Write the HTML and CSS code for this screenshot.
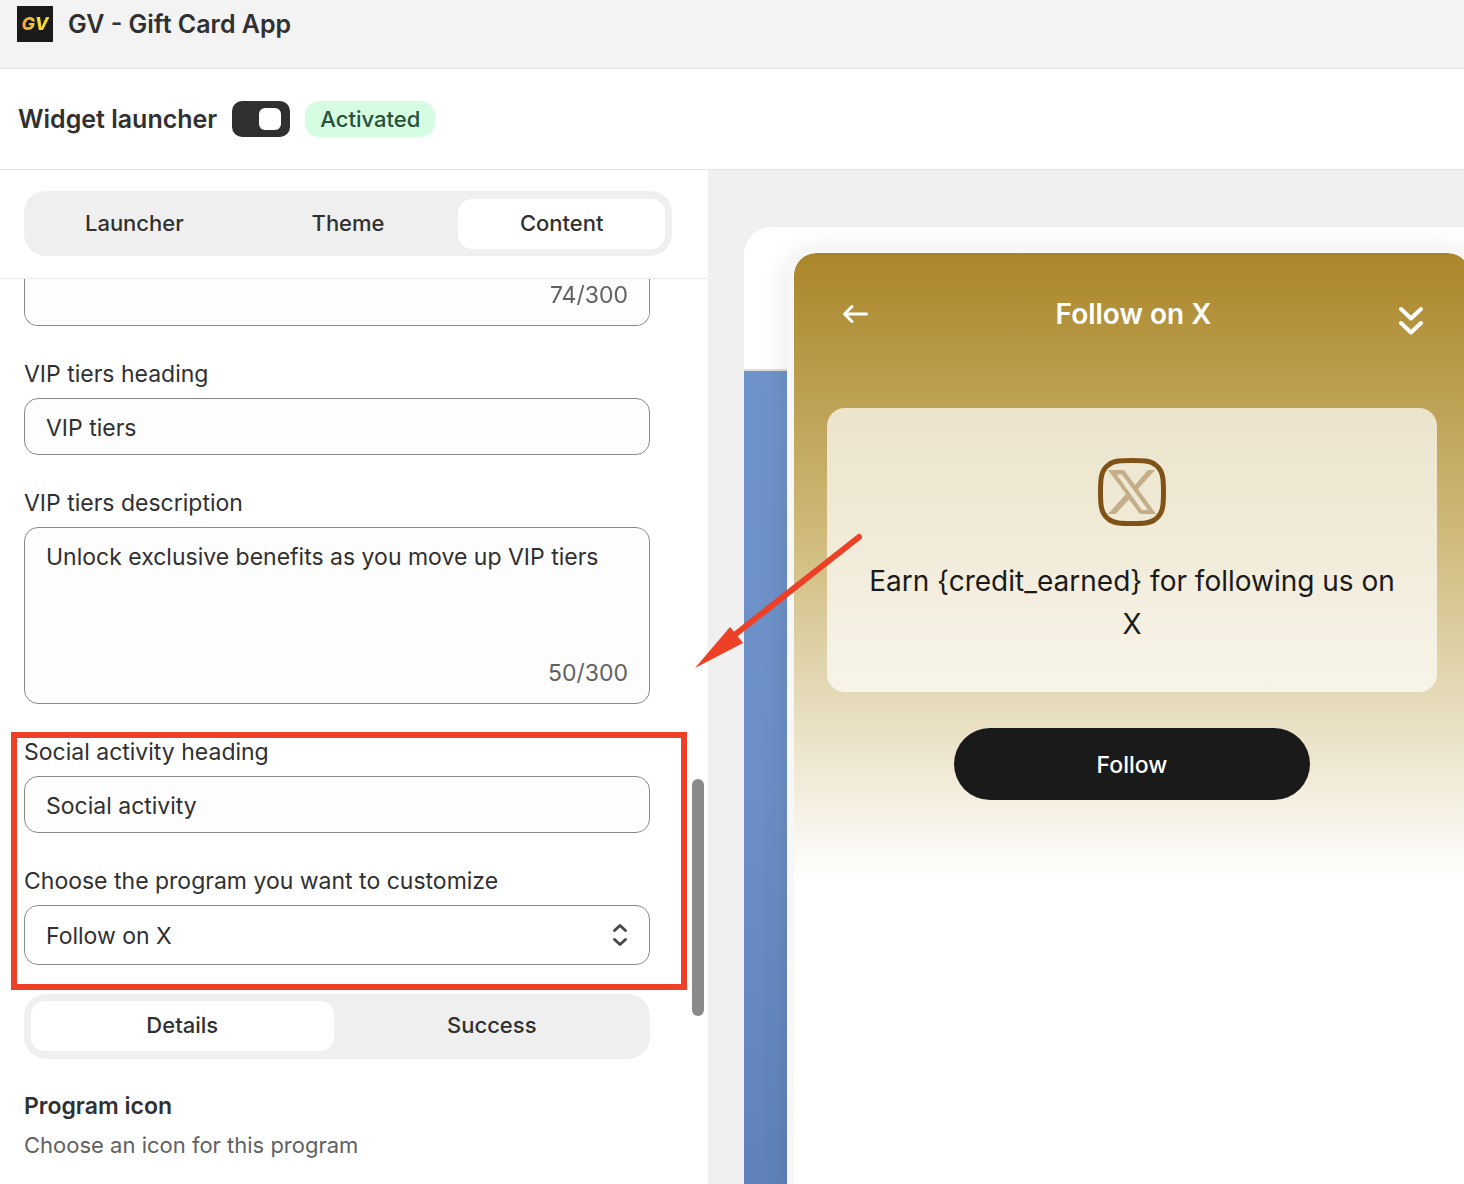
FILE: index.html
```
<!DOCTYPE html>
<html lang="en">
<head>
    <meta charset="UTF-8">
    <meta name="viewport" content="width=device-width, initial-scale=1.0">
    <title>GV - Gift Card App</title>
    <link rel="stylesheet" href="styles.css">
</head>
<body>
    <header class="app-header">
        <div class="app-logo"><span>GV</span></div>
        <h1>GV - Gift Card App</h1>
    </header>

    <div class="launcher-bar">
        <label for="launcherToggle">Widget launcher</label>
        <input type="checkbox" id="launcherToggle" class="toggle" checked>
        <span class="badge">Activated</span>
    </div>

    <main class="editor">
        <section class="settings">
            <div class="settings-tabs">
                <div class="tabs">
                    <button class="tab">Launcher</button>
                    <button class="tab">Theme</button>
                    <button class="tab active">Content</button>
                </div>
            </div>

            <form class="fields">
                <div class="textarea-wrap">
                    <textarea class="control cut" aria-label="Description"></textarea>
                    <span class="counter">74/300</span>
                </div>

                <div class="field">
                    <label for="vipHeading">VIP tiers heading</label>
                    <input type="text" id="vipHeading" class="control" value="VIP tiers">
                </div>

                <div class="field">
                    <label for="vipDescription">VIP tiers description</label>
                    <div class="textarea-wrap">
                        <textarea id="vipDescription" class="control">Unlock exclusive benefits as you move up VIP tiers</textarea>
                        <span class="counter">50/300</span>
                    </div>
                </div>

                <div class="highlight">
                    <div class="field">
                        <label for="socialHeading">Social activity heading</label>
                        <input type="text" id="socialHeading" class="control" value="Social activity">
                    </div>

                    <div class="field">
                        <label for="program">Choose the program you want to customize</label>
                        <div class="select-wrap">
                            <select id="program" class="control">
                                <option>Follow on X</option>
                            </select>
                            <svg class="select-icon" width="16" height="24" viewBox="0 0 16 24">
                                <path d="M2.500 7.500 8 2.500l5.500 5M2.500 16.500l5.500 5 5.500-5"/>
                            </svg>
                        </div>
                    </div>
                </div>

                <div class="tabs">
                    <button type="button" class="tab active">Details</button>
                    <button type="button" class="tab">Success</button>
                </div>

                <div class="program-icon">
                    <h2>Program icon</h2>
                    <p>Choose an icon for this program</p>
                </div>
            </form>

            <div class="scroll-thumb"></div>

            <!-- Arrow pointing at the social activity fields -->
            <svg class="pointer" width="170" height="138" viewBox="0 0 170 138">
                <path class="pointer-line" d="M167 6 40 106"/>
                <path class="pointer-head" d="M3 137 38 96l5 6 8 10z"/>
            </svg>
        </section>

        <section class="preview">
            <div class="storefront">
                <div class="storefront-header"></div>
                <div class="storefront-hero"></div>

                <div class="widget">
                    <div class="widget-header">
                        <button class="icon-btn" aria-label="Back">
                            <svg width="26" height="22" viewBox="0 0 26 22">
                                <path d="M23.500 10H2M9 2.500 1.500 10 9 17.500"/>
                            </svg>
                        </button>
                        <h2>Follow on X</h2>
                        <button class="icon-btn close" aria-label="Minimize">
                            <svg width="26" height="30" viewBox="0 0 26 30">
                                <path d="M3 3l10 9.500L23 3M3 17l10 9.500L23 17"/>
                            </svg>
                        </button>
                    </div>

                    <div class="widget-card">
                        <svg class="x-icon" width="68" height="68" viewBox="0 0 68 68">
                            <path class="x-frame" d="M34 2.500C44 2.500 52 2.500 57 6.500C65 12 65.500 20 65.500 34S65 56 57 61.500C52 65.500 44 65.500 34 65.500S16 65.500 11 61.500C3 56 2.500 48 2.500 34S3 12 11 6.500C16 2.500 24 2.500 34 2.500z"/>
                            <path class="x-mark" fill-rule="evenodd" d="M10 12h16l11 15 13-15h7L40 31 58 56H42L31 41.500 17.500 56H10l18-20zM18.500 16.500 44 52h6L24 16.500z"/>
                        </svg>
                        <p>Earn {credit_earned} for following us on X</p>
                    </div>

                    <button class="follow-btn">Follow</button>
                </div>
            </div>
        </section>
    </main>
</body>
</html>
```

FILE: styles.css
```
* {
    margin: 0;
    padding: 0;
    box-sizing: border-box;
}

body {
    min-height: 100vh;
    display: flex;
    flex-direction: column;
    background: #fff;
    color: #303030;
    font-family: Inter, "Liberation Sans", sans-serif;
    font-size: 23px;
    line-height: 36px;
    overflow-x: hidden;
}

button,
input,
select,
textarea {
    font: inherit;
    color: inherit;
}

button {
    border: none;
    background: transparent;
    cursor: pointer;
}

/* Header */
.app-header {
    display: flex;
    align-items: center;
    gap: 15px;
    padding: 6px 17px 26px;
    background: #f3f3f3;
    border-bottom: 1px solid #e1e1e1;
}

.app-header h1 {
    font-size: 25px;
    font-weight: 600;
}

.app-logo {
    width: 36px;
    height: 36px;
    display: flex;
    align-items: center;
    justify-content: center;
    background: #1a1a1a;
    font-size: 18px;
    font-weight: 800;
    font-style: italic;
}

.app-logo span {
    background: linear-gradient(90deg, #f0a03c, #f9d92f 60%);
    -webkit-background-clip: text;
    background-clip: text;
    color: transparent;
}

.launcher-bar {
    display: flex;
    align-items: center;
    gap: 15px;
    padding: 32px 18px;
    border-bottom: 1px solid #e3e3e3;
}

.launcher-bar label {
    font-size: 25px;
    font-weight: 600;
}

.toggle {
    appearance: none;
    width: 58px;
    height: 36px;
    padding: 7px 9px;
    display: flex;
    justify-content: flex-end;
    border-radius: 10px;
    background: #303030;
    cursor: pointer;
}

.toggle::before {
    content: "";
    width: 22px;
    height: 22px;
    border-radius: 6px;
    background: #fff;
}

.badge {
    padding: 0 15px;
    border-radius: 14px;
    background: #d6fde2;
    color: #25523a;
    font-size: 22px;
    font-weight: 500;
}

/* Settings column */
.editor {
    flex: 1;
    display: grid;
    grid-template-columns: minmax(320px, 708px) 1fr;
}

.settings {
    position: relative;
    z-index: 1;
}

.settings-tabs {
    padding: 21px 36px 22px 24px;
    border-bottom: 1px solid #ebebeb;
}

.tabs {
    display: flex;
    gap: 7px;
    padding: 7px 7px 8px;
    border-radius: 22px;
    background: #efefef;
}

.settings-tabs .tabs {
    padding: 8px 7px 7px;
}

.tab {
    flex: 1 1 0;
    height: 50px;
    padding-bottom: 2px;
    border-radius: 14px;
    font-size: 22px;
    font-weight: 500;
}

.tab.active {
    background: #fff;
}

.fields {
    display: flex;
    flex-direction: column;
    gap: 29px;
    padding: 0 58px 20px 24px;
}

.field {
    display: flex;
    flex-direction: column;
    gap: 5px;
}

.field label {
    line-height: 38px;
}

.control {
    display: block;
    width: 100%;
    height: 57px;
    padding: 2px 21px 0;
    border: 1px solid #8a8a8a;
    border-radius: 14px;
    background: #fdfdfd;
}

textarea.control {
    height: 177px;
    padding-top: 11px;
    resize: none;
}

textarea.cut {
    height: 47px;
    border-top: none;
    border-radius: 0 0 14px 14px;
}

select.control {
    height: 60px;
    appearance: none;
    background: #fff;
}

.textarea-wrap,
.select-wrap {
    position: relative;
}

.counter {
    position: absolute;
    right: 22px;
    bottom: 13px;
    color: #616161;
}

.select-icon {
    position: absolute;
    top: 18px;
    right: 22px;
    fill: none;
    stroke: #4a4a4a;
    stroke-width: 3;
    stroke-linecap: round;
    stroke-linejoin: round;
    pointer-events: none;
}

.highlight {
    position: relative;
    display: flex;
    flex-direction: column;
    gap: 29px;
}

.highlight::after {
    content: "";
    position: absolute;
    inset: -1px -37px -25px -13px;
    border: 6px solid #ee4026;
    pointer-events: none;
}

.program-icon h2 {
    font-size: 23px;
    font-weight: 600;
}

.program-icon p {
    margin-top: 3px;
    color: #616161;
    font-size: 22px;
}

.scroll-thumb {
    position: absolute;
    top: 609px;
    right: 4px;
    width: 12px;
    height: 237px;
    border-radius: 6px;
    background: #8a8a8a;
}

.pointer {
    position: absolute;
    top: 361px;
    right: -154px;
    pointer-events: none;
}

.pointer-line {
    fill: none;
    stroke: #ee4026;
    stroke-width: 6;
    stroke-linecap: round;
}

.pointer-head {
    fill: #ee4026;
}

/* Preview */
.preview {
    display: flex;
    padding: 57px 0 0 36px;
    background: #f0f0f0;
    overflow: hidden;
}

.storefront {
    position: relative;
    flex: 1;
    display: flex;
    flex-direction: column;
    border-radius: 28px 0 0 0;
    background: #fff;
}

.storefront-header {
    height: 144px;
    border-bottom: 2px solid #dedede;
}

.storefront-hero {
    flex: 1;
    background: linear-gradient(#6e93ca, #6b8fc6 50%, #5f82ba);
}

.widget {
    position: absolute;
    inset: 19px -13px 0 43px;
    padding: 40px 33px 0;
    display: flex;
    flex-direction: column;
    align-items: center;
    border: 7px solid #f7f7f7;
    border-bottom: none;
    border-radius: 29px 29px 0 0;
    background: linear-gradient(#aa862a, #cdb876 270px, #fff 627px) padding-box #fff;
    box-shadow: 0 6px 28px rgba(0, 0, 0, 0.1);
}

.widget-header {
    align-self: stretch;
    display: flex;
    align-items: center;
    justify-content: space-between;
    padding: 0 13px 0 16px;
    margin-bottom: 72px;
    color: #fff;
}

.widget-header h2 {
    font-size: 28px;
    font-weight: 600;
    line-height: 43px;
}

.icon-btn {
    display: flex;
}

.icon-btn.close {
    padding-top: 12px;
}

.icon-btn svg {
    fill: none;
    stroke: #fff;
    stroke-width: 3;
    stroke-linecap: round;
    stroke-linejoin: round;
}

.icon-btn.close svg {
    stroke-width: 4;
}

.widget-card {
    align-self: stretch;
    display: flex;
    flex-direction: column;
    align-items: center;
    gap: 34px;
    padding: 50px 36px 46px;
    border-radius: 18px;
    background: rgba(255, 255, 255, 0.7);
}

.widget-card p {
    color: #1a1a1a;
    font-size: 28px;
    line-height: 43px;
    text-align: center;
}

.x-frame {
    fill: none;
    stroke: #7f5217;
    stroke-width: 5;
}

.x-mark {
    fill: #c4ae8a;
}

.follow-btn {
    width: 356px;
    max-width: 100%;
    height: 72px;
    padding-top: 2px;
    margin-top: 36px;
    border-radius: 36px;
    background: #1a1a1a;
    color: #fff;
    font-weight: 500;
}
```
